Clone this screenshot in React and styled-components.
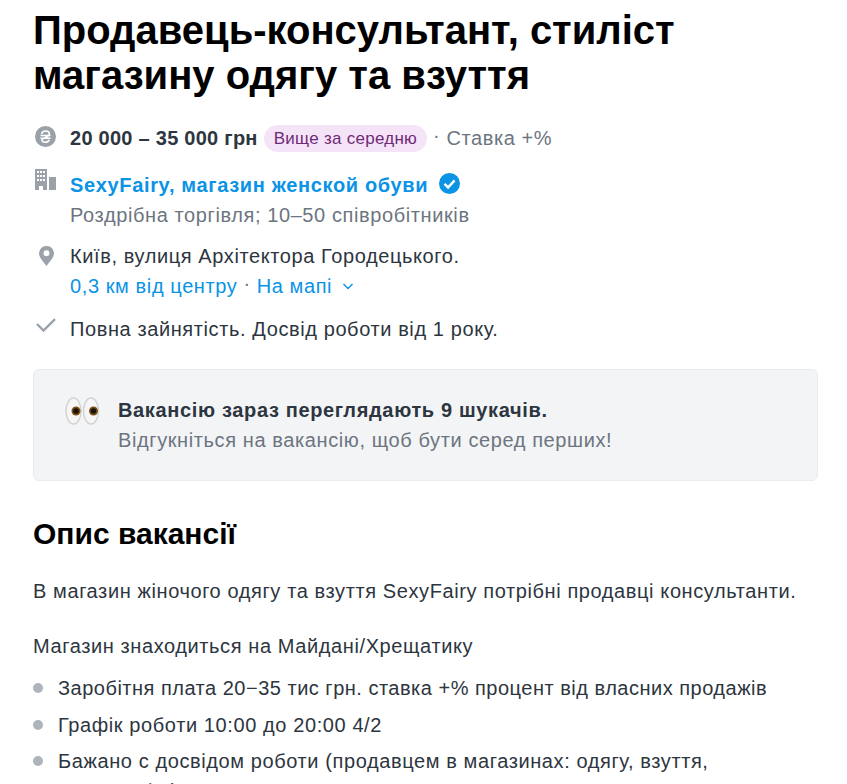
import React from 'react';
import styled, { createGlobalStyle } from 'styled-components';

const GlobalStyle = createGlobalStyle`
  html, body {
    margin: 0;
    background: #fff;
    height: 784px;
    overflow: hidden;
  }
  body {
    font-family: 'Liberation Sans', Arial, sans-serif;
    font-size: 20px;
    letter-spacing: 0.6px;
    line-height: 30px;
    color: #2d3540;
  }
`;

const Page = styled.main`
  padding: 8px 29px 0 33px;
`;

const Title = styled.h1`
  margin: 0 0 25px;
  font-size: 40px;
  line-height: 45px;
  font-weight: 700;
  letter-spacing: 0;
  color: #000;
`;

const Row = styled.div`
  display: grid;
  grid-template-columns: 37px 1fr;
  margin-bottom: ${(p) => p.$gap || 13}px;
`;

const IconCell = styled.div`
  display: flex;
  align-items: flex-start;
  padding: ${(p) => p.$top || 0}px 0 0 ${(p) => p.$left || 2}px;
  color: #9aa1a9;
`;

const Salary = styled.b`
  font-weight: 700;
  letter-spacing: 0.26px;
`;

const Badge = styled.span`
  display: inline-block;
  margin-left: 6px;
  padding: 0 10px;
  height: 27px;
  line-height: 27px;
  border-radius: 14px;
  background: #f5e4f8;
  color: #6f2a78;
  font-size: 17px;
  letter-spacing: 0.27px;
`;

const Muted = styled.span`
  color: #6c7580;
`;

const Dot = styled.span`
  margin: -6px 6px 0 6px;
  color: #6c7580;
`;

const CompanyLink = styled.a`
  color: #0b93e6;
  font-weight: 700;
  letter-spacing: 0.65px;
`;

const Line = styled.div`
  display: flex;
  align-items: center;
  height: ${(p) => p.$height || 30}px;
`;

const Link = styled.a`
  color: #0b93e6;
`;

const Notice = styled.section`
  display: flex;
  align-items: flex-start;
  gap: 18px;
  height: 112px;
  margin-top: 25px;
  padding: 25px 0 0 31px;
  box-sizing: border-box;
  background: #f3f4f6;
  border: 1px solid #e9ebee;
  border-radius: 6px;
`;

const EyesIcon = styled.svg`
  flex: none;
  margin-top: 2px;
`;

const NoticeTitle = styled.div`
  font-weight: 700;
  letter-spacing: 0.65px;
`;

const Heading = styled.h2`
  margin: 35px 0 24px;
  font-size: 30px;
  line-height: 36px;
  font-weight: 700;
  letter-spacing: 0;
  color: #000;
`;

const Para = styled.p`
  margin: 0 0 25px;
`;

const List = styled.ul`
  margin: -13px 0 0;
  padding: 0;
  list-style: none;
`;

const Item = styled.li`
  display: flex;
  gap: 15px;
  margin-bottom: 6.5px;
  letter-spacing: ${(p) => p.$spacing || 0.6}px;
  &::before {
    content: '';
    flex: none;
    width: 10px;
    height: 10px;
    margin-top: 10px;
    border-radius: 50%;
    background: #aeb4bb;
  }
`;

const VerifiedIcon = styled.svg`
  margin: -2px 0 0 11px;
`;

const ChevronIcon = styled.svg`
  margin-left: 9px;
`;

const Hryvnia = () => (
  <svg width="21" height="21" viewBox="0 0 21 21">
    <circle cx="10.500" cy="10.500" r="10.500" fill="currentColor" />
    <path d="M6.800 8c.2-2 1.800-3 3.800-3 2.100 0 3.700 1 3.700 2.900 0 3-5 3.400-7 5.400-.9 1.400.2 2.900 3 2.900 1.900 0 3.300-.7 3.900-2.300M5.500 9.500h10M5.500 12.300h10" fill="none" stroke="#fff" strokeWidth="1.600" />
  </svg>
);

const Building = () => (
  <svg width="21" height="21" viewBox="0 0 21 21">
    <path fill="currentColor" fillRule="evenodd" d="M0 0h12v21H8v-4H4v4H0zM2 2v2h2V2zm3 0v2h2V2zm3 0v2h2V2zM2 6v2h2V6zm3 0v2h2V6zm3 0v2h2V6zM2 10v2h2v-2zm3 0v2h2v-2zm3 0v2h2v-2zM14 8h7v13h-7z" />
  </svg>
);

const Pin = () => (
  <svg width="15" height="20" viewBox="0 0 15 20">
    <path fill="currentColor" fillRule="evenodd" d="M7.500 0A7.300 7.300 0 0 1 15 7.300C15 11.500 10.500 16 7.500 20 4.500 16 0 11.500 0 7.300A7.300 7.300 0 0 1 7.500 0zm0 4.300a3 3 0 1 0 0 6 3 3 0 0 0 0-6z" />
  </svg>
);

const Check = () => (
  <svg width="20" height="14" viewBox="0 0 20 14">
    <path d="M1 6l6.500 6.500L19 1.200" fill="none" stroke="currentColor" strokeWidth="2.400" />
  </svg>
);

const Verified = () => (
  <VerifiedIcon width="21" height="21" viewBox="0 0 21 21">
    <circle cx="10.500" cy="10.500" r="10.500" fill="#0b93e6" />
    <path d="M5.500 10.800l3.600 3.600 6.500-7" fill="none" stroke="#fff" strokeWidth="2.400" />
  </VerifiedIcon>
);

const Chevron = () => (
  <ChevronIcon width="14" height="14" viewBox="0 0 14 14">
    <path d="M2.500 5l4.500 4.500L11.500 5" fill="none" stroke="#0b93e6" strokeWidth="1.500" />
  </ChevronIcon>
);

const Eye = ({ cx }) => (
  <g>
    <ellipse cx={cx} cy="14" rx="7.500" ry="13" fill="#f6f6f6" stroke="#d2d3d3" strokeWidth="1.500" />
    <circle cx={cx + 2.500} cy="14" r="4.500" fill="#7a5012" />
    <circle cx={cx + 2.500} cy="14" r="2.800" fill="#1b120c" />
  </g>
);

const Eyes = () => (
  <EyesIcon width="35" height="28" viewBox="0 0 35 28">
    <Eye cx={8.500} />
    <Eye cx={26} />
  </EyesIcon>
);

export default function App() {
  return (
    <Page>
      <GlobalStyle />
      <Title>Продавець-консультант, стиліст магазину одягу та взуття</Title>

      <Row $gap={16}>
        <IconCell $top={3}><Hryvnia /></IconCell>
        <Line>
          <Salary>20 000 – 35 000 грн</Salary>
          <Badge>Вище за середню</Badge>
          <Dot>·</Dot>
          <Muted>Ставка +%</Muted>
        </Line>
      </Row>

      <Row $gap={11}>
        <IconCell><Building /></IconCell>
        <div>
          <Line $height={31}>
            <CompanyLink>SexyFairy, магазин женской обуви</CompanyLink>
            <Verified />
          </Line>
          <Muted>Роздрібна торгівля; 10–50 співробітників</Muted>
        </div>
      </Row>

      <Row $gap={13}>
        <IconCell $top={5} $left={6}><Pin /></IconCell>
        <div>
          <div>Київ, вулиця Архітектора Городецького.</div>
          <Line>
            <Link>0,3 км від центру</Link>
            <Dot>·</Dot>
            <Link>На мапі</Link>
            <Chevron />
          </Line>
        </div>
      </Row>

      <Row>
        <IconCell $top={4} $left={3}><Check /></IconCell>
        <div>Повна зайнятість. Досвід роботи від 1 року.</div>
      </Row>

      <Notice>
        <Eyes />
        <div>
          <NoticeTitle>Вакансію зараз переглядають 9 шукачів.</NoticeTitle>
          <Muted>Відгукніться на вакансію, щоб бути серед перших!</Muted>
        </div>
      </Notice>

      <Heading>Опис вакансії</Heading>
      <Para>В магазин жіночого одягу та взуття SexyFairy потрібні продавці консультанти.</Para>
      <Para>Магазин знаходиться на Майдані/Хрещатику</Para>
      <List>
        <Item $spacing={0.5}>Заробітня плата 20−35 тис грн. ставка +% процент від власних продажів</Item>
        <Item>Графік роботи 10:00 до 20:00 4/2</Item>
        <Item><span>Бажано с досвідом роботи (продавцем в магазинах: одягу, взуття,<br />сумок та ін.)</span></Item>
      </List>
    </Page>
  );
}
